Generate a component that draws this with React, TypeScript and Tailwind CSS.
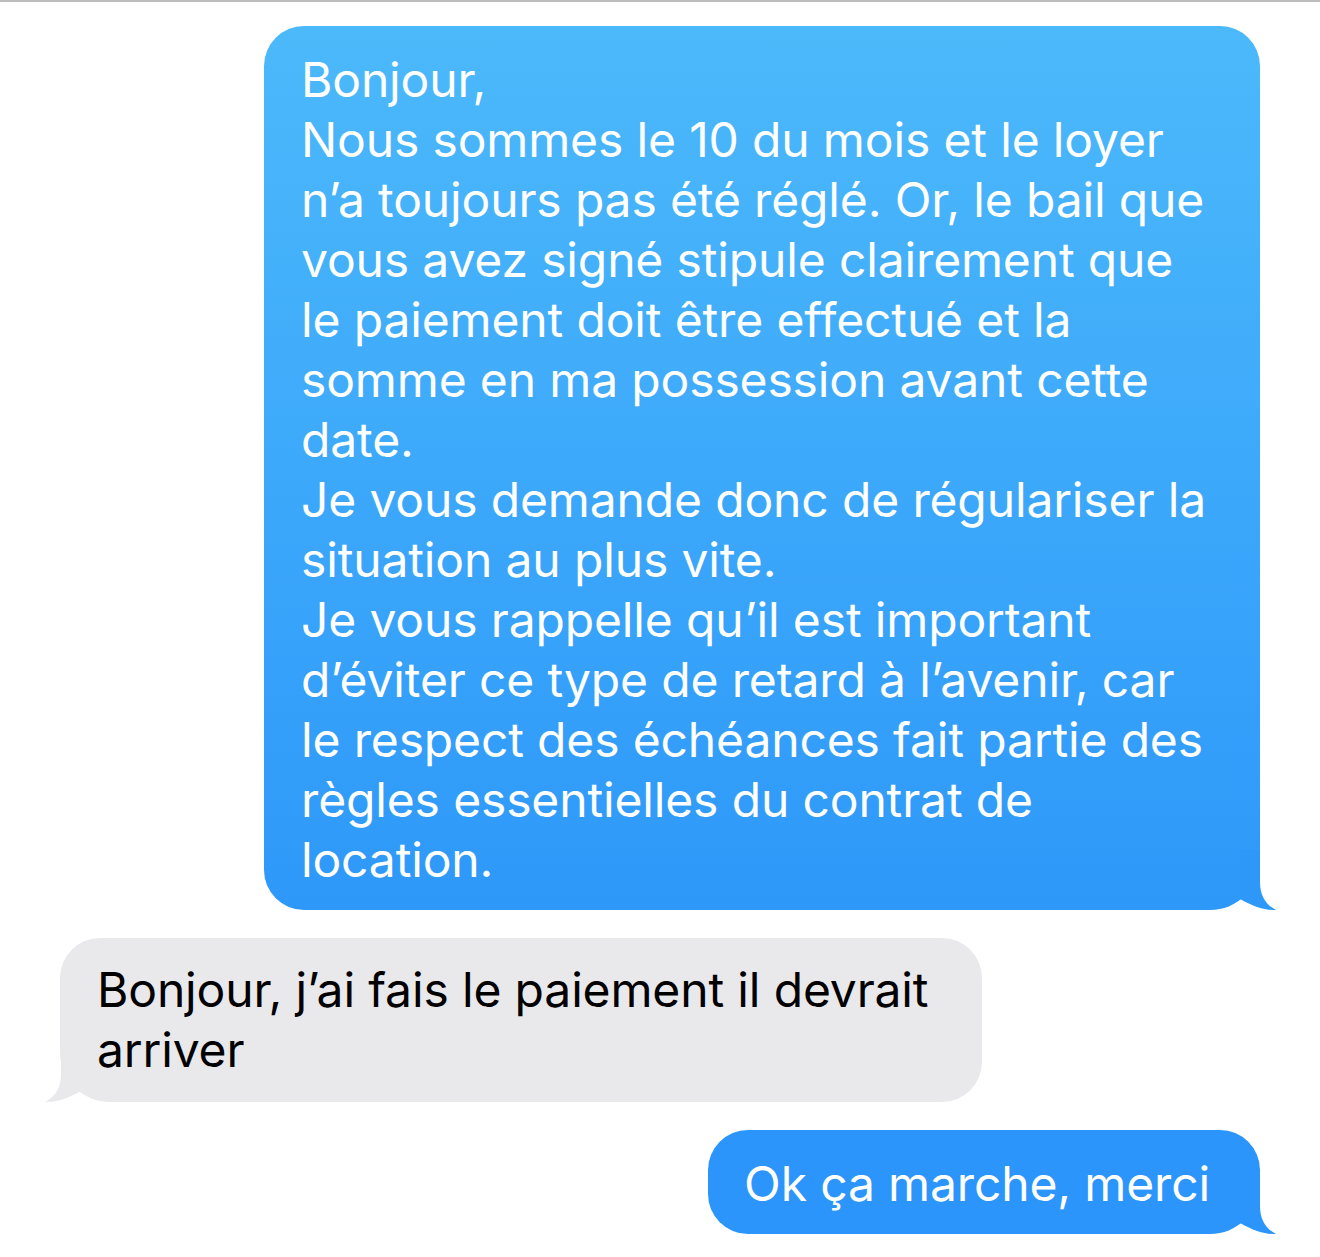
import React from "react";

const font = { fontFamily: "Inter, 'Noto Sans', sans-serif" };

function TailRight({ color }: { color: string }) {
  return (
    <svg
      className="absolute -right-[16px] bottom-0"
      width="40"
      height="60"
      viewBox="0 0 40 60"
    >
      <path d="M24 0 V32 C24 46 30 55 40 60 C30 60.5 18 57 4 49 L4 0 Z" fill={color} />
    </svg>
  );
}

function TailLeft({ color }: { color: string }) {
  return (
    <svg
      className="absolute -left-[15px] bottom-0 -scale-x-100"
      width="40"
      height="60"
      viewBox="0 0 40 60"
    >
      <path d="M24 0 V32 C24 46 30 55 40 60 C30 60.5 18 57 4 49 L4 0 Z" fill={color} />
    </svg>
  );
}

const lines1 = [
  "Bonjour,",
  "Nous sommes le 10 du mois et le loyer",
  "n\u2019a toujours pas été réglé. Or, le bail que",
  "vous avez signé stipule clairement que",
  "le paiement doit être effectué et la",
  "somme en ma possession avant cette",
  "date.",
  "Je vous demande donc de régulariser la",
  "situation au plus vite.",
  "Je vous rappelle qu\u2019il est important",
  "d\u2019éviter ce type de retard à l\u2019avenir, car",
  "le respect des échéances fait partie des",
  "règles essentielles du contrat de",
  "location.",
];

const lineCls = "h-[60px] whitespace-nowrap text-[48px] leading-[60px] tracking-[-0.003em]";

export default function App() {
  return (
    <div className="min-h-[1257px] w-[1320px] bg-white" style={font}>
      <div className="h-[2px] bg-[#bdbdbd]" />
      <div className="flex flex-col pt-[24px] pb-[20px]">
        <div className="flex justify-end pr-[60px]">
          <div className="relative w-[996px] rounded-[40px] rounded-br-[50px] bg-gradient-to-b from-[#4cb9fb] to-[#2e98f9] pl-[37px] pr-[20px] pt-[24px] pb-[20px] text-white">
            {lines1.map((l, i) => (
              <div key={i} className={lineCls}>
                {l}
              </div>
            ))}
            <TailRight color="#2e98f9" />
          </div>
        </div>

        <div className="mt-[28px] flex justify-start pl-[60px]">
          <div className="relative w-[922px] rounded-[40px] rounded-bl-[50px] bg-[#e9e9eb] pl-[37px] pr-[20px] pt-[22px] pb-[22px] text-black">
            <div className={lineCls}>{"Bonjour, j\u2019ai fais le paiement il devrait"}</div>
            <div className={lineCls}>arriver</div>
            <TailLeft color="#e9e9eb" />
          </div>
        </div>

        <div className="mt-[28px] flex justify-end pr-[60px]">
          <div className="relative rounded-[40px] rounded-br-[50px] bg-[#2b95fb] pl-[36px] pr-[50px] pt-[24px] pb-[20px] text-white">
            <div className={lineCls}>Ok ça marche, merci</div>
            <TailRight color="#2b95fb" />
          </div>
        </div>
      </div>
    </div>
  );
}
